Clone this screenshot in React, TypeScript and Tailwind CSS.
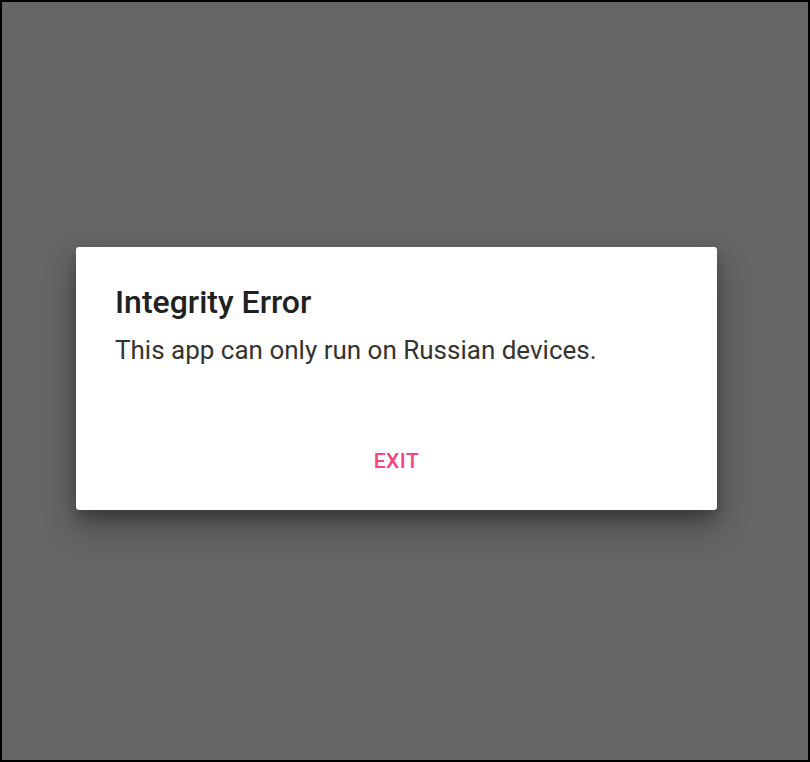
import React from 'react';

const App: React.FC = () => {
    return (
        <div className="h-[762px] w-[810px] border-2 border-black bg-[#656565] pl-[74px] pt-[245px]" style={{ fontFamily: 'Roboto, "Noto Sans", sans-serif' }}>
            <div className="flex h-[263px] w-[641px] flex-col rounded-[3px] bg-white shadow-[0_16px_32px_rgba(0,0,0,0.3),0_8px_14px_rgba(0,0,0,0.22)]">
                <div className="px-[39px] pt-[36px]">
                    <h1 className="text-[32px] font-medium leading-[38px] text-[#212121]">Integrity Error</h1>
                    <p className="mt-[13px] text-[26px] leading-[32px] text-[#333333]">This app can only run on Russian devices.</p>
                </div>
                <div className="mt-auto flex justify-center pb-[37px]">
                    <button className="text-[21px] font-medium uppercase leading-[24px] tracking-[0.5px] text-[#ff4081]">Exit</button>
                </div>
            </div>
        </div>
    );
};

export default App;
